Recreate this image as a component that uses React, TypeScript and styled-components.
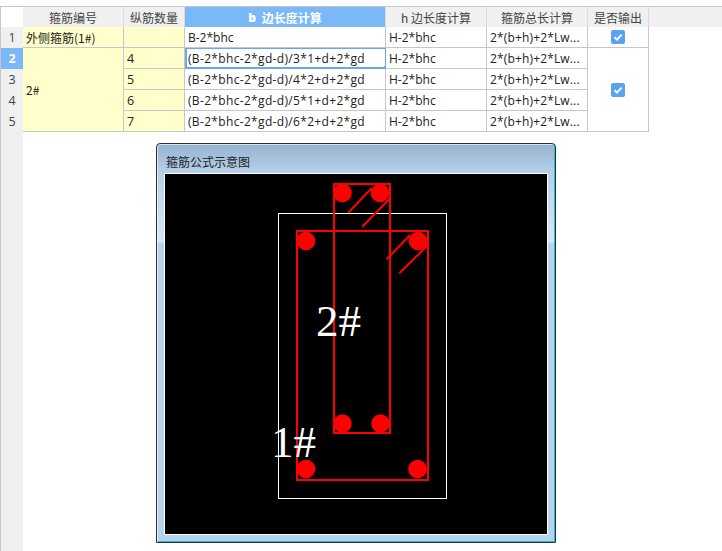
import React from "react"
import styled, { createGlobalStyle, css } from "styled-components"

const GlobalStyle = createGlobalStyle`
  html, body {
    margin: 0;
    padding: 0;
    background: #ffffff;
  }
  body {
    width: 722px;
    height: 551px;
    overflow: hidden;
    font-family: "Noto Sans CJK SC", "Liberation Sans", sans-serif;
  }
`

const rows = [
  { num: "1", b: "B-2*bhc" },
  { num: "2", b: "(B-2*bhc-2*gd-d)/3*1+d+2*gd", count: "4", active: true },
  { num: "3", b: "(B-2*bhc-2*gd-d)/4*2+d+2*gd", count: "5" },
  { num: "4", b: "(B-2*bhc-2*gd-d)/5*1+d+2*gd", count: "6" },
  { num: "5", b: "(B-2*bhc-2*gd-d)/6*2+d+2*gd", count: "7" },
]

const CheckBox = () => (
  <CheckMark viewBox="0 0 14 14">
    <rect x="0" y="0" width="14" height="14" rx="2" fill="#5aa2f2" />
    <path d="M3.5 7.2 L6 9.6 L10.6 4.6" fill="none" stroke="#ffffff" strokeWidth="2" />
  </CheckMark>
)

const App = () => {
  return (
    <Page>
      <GlobalStyle />
      <TopGap />
      <Sheet>
        <Corner />
        <HeadCell>箍筋编号</HeadCell>
        <HeadCell>纵筋数量</HeadCell>
        <HeadCell $selected>
          <b>b</b> 边长度计算
        </HeadCell>
        <HeadCell>h 边长度计算</HeadCell>
        <HeadCell>箍筋总长计算</HeadCell>
        <HeadCell>是否输出</HeadCell>
        <HeadFill />

        {rows.map((r, i) => (
          <React.Fragment key={r.num}>
            <RowNum $active={r.active} style={{ gridRow: i + 2 }}>
              {r.num}
            </RowNum>
            {i === 0 && (
              <>
                <YellowCell style={{ gridRow: 2 }}>外侧箍筋(1#)</YellowCell>
                <YellowCell style={{ gridRow: 2, gridColumn: 3 }} />
              </>
            )}
            {i === 1 && <YellowCell style={{ gridRow: "3 / span 4" }}>2#</YellowCell>}
            {i > 0 && (
              <CountCell style={{ gridRow: i + 2, gridColumn: 3 }}>{r.count}</CountCell>
            )}
            <Cell $active={r.active} $spacing={i > 0 ? 0.33 : 0} style={{ gridRow: i + 2, gridColumn: 4 }}>
              {r.b}
              {r.active && <FillHandle />}
            </Cell>
            <Cell style={{ gridRow: i + 2, gridColumn: 5 }}>H-2*bhc</Cell>
            <Cell $spacing={0.15} style={{ gridRow: i + 2, gridColumn: 6 }}>
              2*(b+h)+2*Lw...
            </Cell>
            {i === 0 && (
              <CheckCell style={{ gridRow: 2, gridColumn: 7 }}>
                <CheckBox />
              </CheckCell>
            )}
            {i === 1 && (
              <CheckCell style={{ gridRow: "3 / span 4", gridColumn: 7 }}>
                <CheckBox />
              </CheckCell>
            )}
          </React.Fragment>
        ))}
      </Sheet>

      <Lower>
        <Gutter />
        <DialogArea>
          <Dialog>
            <DialogTitle>箍筋公式示意图</DialogTitle>
            <Canvas>
              <svg width="382" height="360" viewBox="0 0 382 360">
                <rect x="113.5" y="39.5" width="168" height="285" fill="none" stroke="#fff" />
                <g fill="none" stroke="#f00" strokeWidth="2">
                  <rect x="132" y="57" width="131" height="249" />
                  <rect x="169" y="10" width="56" height="249" />
                  <path d="M183.3 38.7 L206.7 14 M197.3 52.7 L225 24.3" />
                  <path d="M221.7 85.3 L245 61 M234.3 99.3 L263 71" />
                </g>
                <g fill="#f00">
                  <circle cx="177.5" cy="19" r="9.3" />
                  <circle cx="215" cy="19" r="9.3" />
                  <circle cx="141" cy="67" r="9.3" />
                  <circle cx="253" cy="67" r="9.3" />
                  <circle cx="177.5" cy="249.5" r="9.3" />
                  <circle cx="215.5" cy="249.5" r="9.3" />
                  <circle cx="141" cy="295" r="9.3" />
                  <circle cx="252.5" cy="295" r="9.3" />
                </g>
                <DrawingLabel x="151" y="162">2#</DrawingLabel>
                <DrawingLabel x="106" y="283">1#</DrawingLabel>
              </svg>
            </Canvas>
          </Dialog>
        </DialogArea>
      </Lower>
    </Page>
  )
}
export default App

const Page = styled.div`
  display: flex;
  flex-direction: column;
  width: 722px;
  height: 551px;
  background: #ffffff;
`

const TopGap = styled.div`
  height: 6px;
  flex-shrink: 0;
`

const Sheet = styled.div`
  display: grid;
  grid-template-columns: 23px 101px 61px 201px 101px 101px 61px 1fr;
  grid-template-rows: 21px repeat(5, 21px);
  flex-shrink: 0;
  font-size: 12px;
  color: #222222;
`

const headBase = css`
  box-sizing: border-box;
  background: #f0f0f0;
  border-top: 1px solid #c6c6cc;
`

const Corner = styled.div`
  ${headBase}
  border-left: 1px solid #c6c6cc;
  background: #ffffff;
`

const HeadFill = styled.div`
  ${headBase}
`

const HeadCell = styled.div<{ $selected?: boolean }>`
  ${headBase}
  display: flex;
  align-items: center;
  justify-content: center;
  gap: 3px;
  border-right: 1px solid #dcdcdc;
  white-space: pre;
  color: #444444;
  ${(p) =>
    p.$selected &&
    css`
      background: #7ab8f8;
      color: #ffffff;
      font-weight: 700;
    `}
  b {
    font-family: "Open Sans", sans-serif;
  }
`

const RowNum = styled.div<{ $active?: boolean }>`
  box-sizing: border-box;
  grid-column: 1;
  display: flex;
  align-items: center;
  justify-content: center;
  border-left: 1px solid #c6c6cc;
  background: ${(p) => (p.$active ? "#7ab8f8" : "#f0f0f0")};
  color: ${(p) => (p.$active ? "#ffffff" : "#444444")};
  font-weight: ${(p) => (p.$active ? 700 : 400)};
  font-size: 12.5px;
  font-family: "Open Sans", sans-serif;
`

const bodyCell = css`
  box-sizing: border-box;
  display: flex;
  align-items: center;
  padding-left: 3px;
  border-right: 1px solid #c6c6cc;
  border-bottom: 1px solid #c6c6cc;
  white-space: nowrap;
`

const YellowCell = styled.div`
  ${bodyCell}
  background: #ffffcc;
`

const CountCell = styled(YellowCell)`
  font-family: "Open Sans", sans-serif;
  font-size: 12.5px;
`

const Cell = styled.div<{ $active?: boolean; $spacing?: number }>`
  ${bodyCell}
  position: relative;
  font-family: "Open Sans", "Noto Sans CJK SC", sans-serif;
  letter-spacing: ${(p) => p.$spacing ?? 0}px;
  background: #ffffff;
  ${(p) =>
    p.$active &&
    css`
      border: 1px solid #6aa8ee;
      border-bottom-width: 2px;
      border-left-width: 2px;
      padding-left: 1px;
    `}
`

const FillHandle = styled.span`
  position: absolute;
  right: -3px;
  bottom: -3px;
  width: 4px;
  height: 4px;
  background: #6aa8ee;
`

const CheckCell = styled.div`
  ${bodyCell}
  justify-content: center;
  padding: 0 1px 0 0;
  background: #ffffff;
`

const CheckMark = styled.svg`
  width: 14px;
  height: 14px;
`

const Lower = styled.div`
  display: flex;
  flex: 1;
  min-height: 0;
`

const Gutter = styled.div`
  box-sizing: border-box;
  width: 23px;
  background: #f0f0f0;
  border-left: 1px solid #c6c6cc;
  flex-shrink: 0;
`

const DialogArea = styled.div`
  flex: 1;
  padding: 11px 0 0 133px;
`

const Dialog = styled.div`
  box-sizing: border-box;
  display: flex;
  flex-direction: column;
  width: 400px;
  height: 400px;
  padding: 0 7px 7px 7px;
  border: 1px solid #2e2e2e;
  border-radius: 4px 4px 0 0;
  background: linear-gradient(
    180deg,
    #96b3d1 0,
    #b7d1ea 30px,
    #d6e6f5 98px,
    #b6d2ec 100px,
    #b6d2ec 100%
  );
  box-shadow: inset 1px 1px 0 rgba(255, 255, 255, 0.6), inset -1px -1px 0 #1fc0e0;
`

const DialogTitle = styled.div`
  box-sizing: border-box;
  height: 29px;
  flex-shrink: 0;
  display: flex;
  align-items: center;
  padding: 5px 0 0 2px;
  font-size: 12px;
  color: #222222;
`

const Canvas = styled.div`
  flex: 1;
  min-height: 0;
  overflow: hidden;
  background: #000000;
  border: 1px solid #ffffff;
`

const DrawingLabel = styled.text`
  font-family: "Liberation Serif", serif;
  font-size: 45px;
  fill: #ffffff;
`
